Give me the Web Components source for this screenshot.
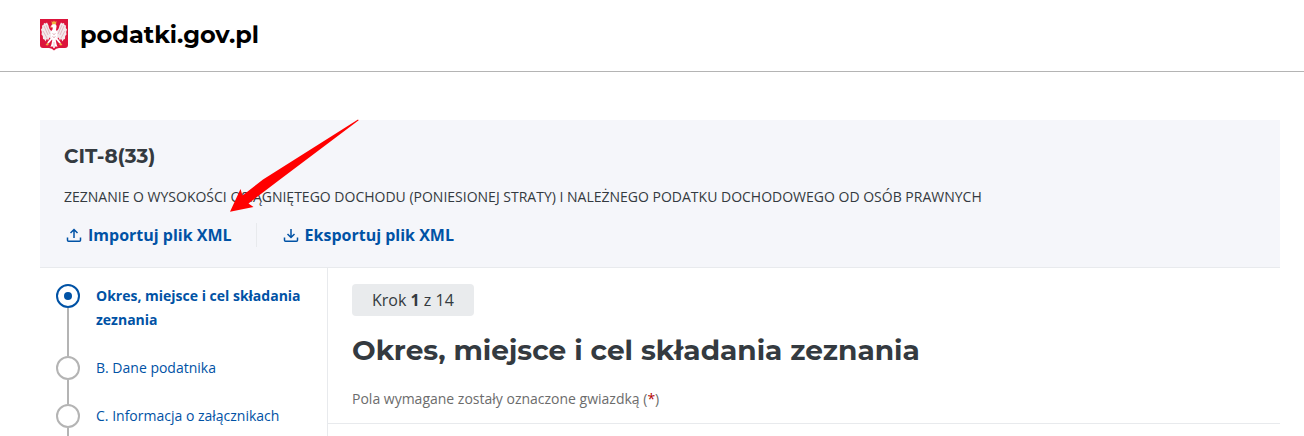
<!DOCTYPE html>
<html lang="pl">
<head>
<meta charset="utf-8">
<meta name="viewport" content="width=device-width, initial-scale=1">
<title>CIT-8(33) - podatki.gov.pl</title>
<style>
  :root {
    --blue: #0052a5;
    --text: #343a40;
    --muted: #6c6c6c;
    --line: #e8eaed;
    --gray: #b4b4b4;
    --heading: Montserrat, "Open Sans", sans-serif;
  }
  body {
    margin: 0;
    background: #fff;
    color: var(--text);
    font-family: "Open Sans", "Noto Sans", sans-serif;
    font-size: 14px;
    line-height: 24px;
  }
</style>
</head>
<body>
<form-page>
  <site-header slot="header">podatki.gov.pl</site-header>
  <form-banner slot="banner">
    <span slot="title">CIT-8(33)</span>
    <span slot="description">ZEZNANIE O WYSOKOŚCI OSIĄGNIĘTEGO DOCHODU (PONIESIONEJ STRATY) I NALEŻNEGO PODATKU DOCHODOWEGO OD OSÓB PRAWNYCH</span>
    <file-action slot="actions" icon="import">Importuj plik XML</file-action>
    <file-action slot="actions" icon="export">Eksportuj plik XML</file-action>
    <pointer-arrow slot="overlay"></pointer-arrow>
  </form-banner>
  <step-list slot="steps">
    <step-item active>Okres, miejsce i cel składania zeznania</step-item>
    <step-item>B. Dane podatnika</step-item>
    <step-item>C. Informacja o załącznikach</step-item>
  </step-list>
  <step-header current="1" total="14">Okres, miejsce i cel składania zeznania</step-header>
</form-page>

<script>
function define(name, html, setup) {
  const template = document.createElement('template');
  template.innerHTML = html;
  customElements.define(name, class extends HTMLElement {
    constructor() {
      super();
      this.attachShadow({ mode: 'open' }).appendChild(template.content.cloneNode(true));
    }
    connectedCallback() {
      if (setup) setup(this, this.shadowRoot);
    }
  });
}

define('form-page', `
  <style>
    :host {
      display: flex;
      flex-direction: column;
      min-height: 100vh;
    }
    main {
      flex: 1;
      display: flex;
      flex-direction: column;
      padding: 48px 24px 0 40px;
    }
    .columns {
      flex: 1;
      display: grid;
      grid-template-columns: 288px 1fr;
    }
  </style>
  <slot name="header"></slot>
  <main>
    <slot name="banner"></slot>
    <div class="columns">
      <slot name="steps"></slot>
      <slot></slot>
    </div>
  </main>
`);

define('site-header', `
  <style>
    :host {
      display: block;
      border-bottom: 1px solid var(--gray);
      padding: 19px 40px 20px;
    }
    a {
      display: inline-flex;
      align-items: center;
      gap: 12px;
      vertical-align: top;
      color: #000;
      font: 700 24px/32px var(--heading);
      text-decoration: none;
    }
    svg { display: block; }
  </style>
  <header>
    <a href="#">
      <svg width="28" height="32" viewBox="0 0 28 32" aria-hidden="true">
        <path fill="#dc143c" d="M0 0h28v26q0 3-3 3h-6q-3 0-5 2.500q-2-2.500-5-2.500H3q-3 0-3-3z"/>
        <!-- wings -->
        <g fill="#f3e9ec">
          <path id="wing" d="M11.500 12C9.500 11 9 9 8.500 6.500L7 3.500 5.500 4.500 4 4 3.500 6 2 6.500 2.200 9 1 10.500 1.800 13 1.500 15.500 2.800 17 3 20 4.500 20.500 5.500 22.500 7 19.500 8 21.500 9.500 18.500 11 19.500 12.500 16z"/>
          <use href="#wing" transform="matrix(-1 0 0 1 28 0)"/>
        </g>
        <!-- head, body, legs and tail -->
        <g fill="#fff">
          <path d="M10.500 8l1.500-2.500q2-1.500 4 0 1 1.500.3 3.500l-.3 2 1.500 2-.5 5-1.500 3h-3L11 18l-.5-5 2-2.500.3-2z"/>
          <path d="M12.500 20h3l1 5 1 3-1.800-.8L14 29.500l-1.700-2.300-1.800.8 1-3z"/>
          <path d="M11.500 18l1 2-3.500 4-2.500 1.500L8 22.500zM16.500 18l-1 2 3.500 4 2.500 1.500L20 22.500z"/>
        </g>
        <path fill="none" stroke="#d993a2" stroke-width=".6" d="M4 7l4 9M6 6l4 9M3 12l4 7M24 7l-4 9M22 6l-4 9M25 12l-4 7M12.500 14l1.500 2 1.500-2M12.500 17l1.500 2 1.500-2M14 23v5"/>
        <path fill="#f0b23e" d="M12 5.300L11.500 2l1.500 1 1-1.500L15 3l1.500-1-.5 3.300zM9.800 8.500l1.700-1.200.4 1.200zM5.500 26l1.800-2 1.700 1-1.500 1.500zM22.500 26l-1.800-2-1.700 1 1.500 1.500z"/>
      </svg>
      <slot></slot>
    </a>
  </header>
`);

define('form-banner', `
  <style>
    :host {
      display: block;
      position: relative;
      background: #f5f6fa;
      border-bottom: 1px solid var(--line);
      padding: 24px 24px 20px;
    }
    h2 {
      margin: 0 0 17px;
      font: 700 20px/24px var(--heading);
    }
    p { margin: 0 0 14px; }
    .actions {
      display: flex;
      flex-wrap: wrap;
    }
  </style>
  <h2><slot name="title"></slot></h2>
  <p><slot name="description"></slot></p>
  <div class="actions"><slot name="actions"></slot></div>
  <slot name="overlay"></slot>
`);

define('file-action', `
  <style>
    :host { display: block; }
    :host(:not(:first-of-type)) {
      margin-left: 24px;
      border-left: 1px solid var(--line);
      padding-left: 24px;
    }
    button {
      display: flex;
      align-items: center;
      gap: 4px;
      border: 0;
      padding: 0;
      background: none;
      color: var(--blue);
      font: inherit;
      font-size: 16px;
      font-weight: 700;
      cursor: pointer;
    }
    svg {
      fill: none;
      stroke: currentColor;
      stroke-width: 1.500;
    }
  </style>
  <button type="button">
    <svg width="20" height="20" viewBox="0 0 20 20" aria-hidden="true">
      <path d="M3.500 12.500v2.700q0 1 1 1h11q1 0 1-1v-2.700"/>
      <path class="arrow"/>
    </svg>
    <slot></slot>
  </button>
`, (el, root) => {
  const arrows = {
    import: 'M10 13V4.500M6.500 8L10 4.500 13.500 8',
    export: 'M10 4v8.500M6.500 9l3.500 3.500L13.500 9'
  };
  root.querySelector('.arrow').setAttribute('d', arrows[el.getAttribute('icon')]);
});

// lies over the banner, tip at the import button
define('pointer-arrow', `
  <style>
    :host {
      position: absolute;
      left: 190px;
      top: 0;
      pointer-events: none;
    }
    svg { display: block; overflow: visible; }
  </style>
  <svg width="130" height="93" viewBox="0 0 130 93" aria-hidden="true">
    <path fill="#f00" d="M128-.5L128.700.3 48 61 18.500 83.500 23.500 87 0 91.700 10.500 69 12.500 75.500 33 59.500z"/>
  </svg>
`);

define('step-list', `
  <style>
    :host {
      display: block;
      border-right: 1px solid var(--line);
      padding: 16px 16px 0;
    }
    nav {
      display: flex;
      flex-direction: column;
      height: 100%;
    }
    ::slotted(:last-child) { flex: 1; }
  </style>
  <nav aria-label="Kroki"><slot></slot></nav>
`);

define('step-item', `
  <style>
    :host {
      display: flex;
      gap: 16px;
    }
    .marker {
      display: flex;
      flex-direction: column;
      align-items: center;
    }
    .circle {
      box-sizing: border-box;
      display: grid;
      place-items: center;
      width: 24px;
      height: 24px;
      border: 2px solid var(--gray);
      border-radius: 50%;
    }
    .line {
      flex: 1;
      width: 2px;
      background: var(--gray);
    }
    a {
      flex: 1;
      color: var(--blue);
      text-decoration: none;
    }
    :host(:not(:last-child)) a { padding-bottom: 24px; }
    :host([active]) a { font-weight: 700; }
    :host([active]) .circle { border-color: var(--blue); }
    :host([active]) .circle::after {
      content: "";
      width: 8px;
      height: 8px;
      border-radius: 50%;
      background: var(--blue);
    }
  </style>
  <span class="marker"><span class="circle"></span><span class="line"></span></span>
  <a href="#"><slot></slot></a>
`);

define('step-header', `
  <style>
    :host { display: block; }
    header {
      border-bottom: 1px solid var(--line);
      padding: 16px 24px 12px;
    }
    .badge {
      display: inline-block;
      vertical-align: top;
      border-radius: 4px;
      padding: 0 20px;
      background: #e9ebed;
      font-size: 16px;
      line-height: 32px;
    }
    h1 {
      margin: 16px 0 19px;
      font: 700 28px/36px var(--heading);
    }
    p {
      margin: 0;
      color: var(--muted);
    }
    .required { color: #b30000; }
  </style>
  <header>
    <span class="badge">Krok <b class="current"></b> z <span class="total"></span></span>
    <h1><slot></slot></h1>
    <p>Pola wymagane zostały oznaczone gwiazdką (<span class="required">*</span>)</p>
  </header>
`, (el, root) => {
  root.querySelector('.current').textContent = el.getAttribute('current');
  root.querySelector('.total').textContent = el.getAttribute('total');
});
</script>
</body>
</html>
